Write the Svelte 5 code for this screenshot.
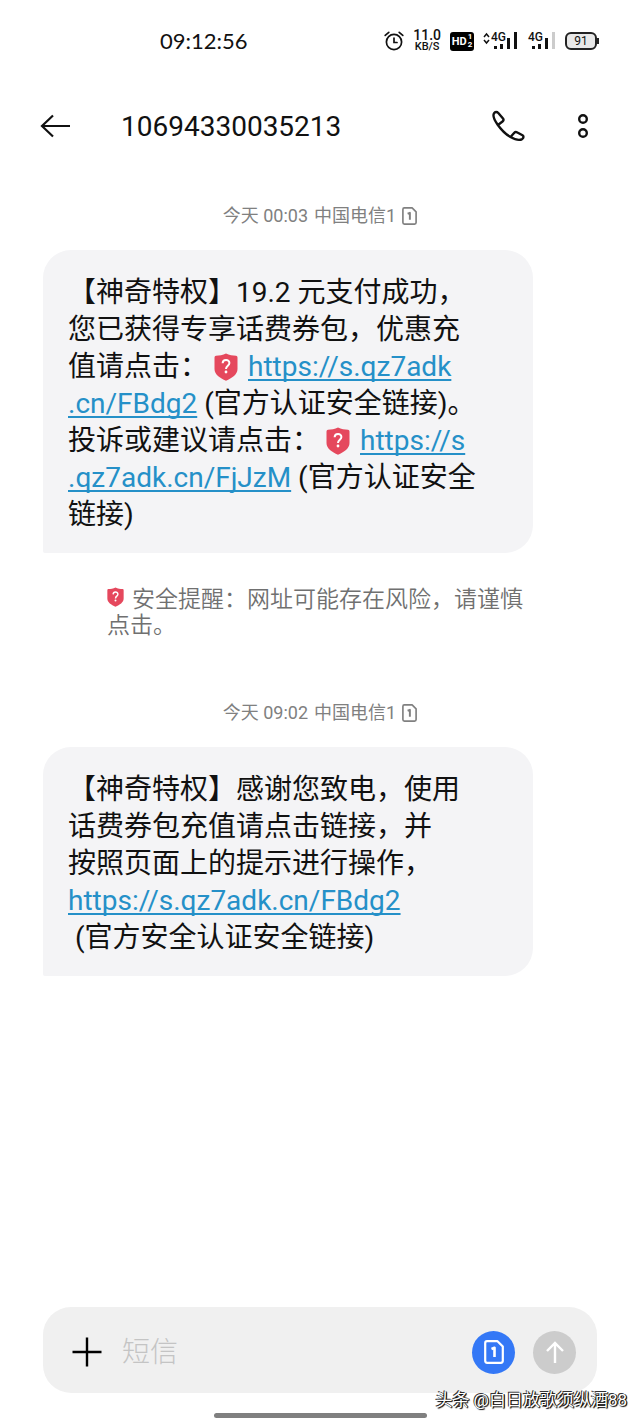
<script lang="ts">
  const number = '10694330035213';
  const carrier = '中国电信1';
  let draft = $state('');
</script>

{#snippet shield(cls: string)}
  <svg class={cls} viewBox="0 0 24 28" aria-hidden="true">
    <path d="M12 0.5 C15 2 19 2.6 22 2.8 Q23.5 3 23.5 4.5 V16 C23.5 21.500 18 25 12 27.8 C6 25 0.5 21.500 0.5 16 V4.5 Q0.5 3 2 2.8 C5 2.6 9 2 12 0.5Z" fill="#e5485d" />
    <path d="M8.600 10.300 C8.800 6 15.400 6 15.400 10 C15.400 12.800 12 12.800 12 16" fill="none" stroke="#fff" stroke-width="2" />
    <circle cx="12" cy="19" r="1.400" fill="#fff" />
  </svg>
{/snippet}

{#snippet sim(cls: string)}
  <svg class={cls} viewBox="0 0 20 24" fill="none" stroke="currentColor" stroke-width="2.200" stroke-linejoin="round" aria-hidden="true">
    <path d="M3 1.200 H13.500 L18.800 6.500 V20.800 Q18.800 22.800 16.800 22.800 H3.200 Q1.200 22.800 1.200 20.800 V3.200 Q1.200 1.200 3 1.200Z" />
    <path d="M7.500 9 L10.500 7.800 V17" stroke-width="2.600" />
  </svg>
{/snippet}

{#snippet stamp(time: string)}
  <p class="stamp">
    <span>今天 {time}</span>
    <span>{carrier}</span>
    {@render sim('stamp__sim')}
  </p>
{/snippet}

<div class="phone">
  <div class="status">
    <time class="status__time">09:12:56</time>
    <div class="status__icons">
      <svg class="alarm" viewBox="0 0 20 20" fill="none" stroke="#111" stroke-width="1.700" stroke-linecap="round">
        <circle cx="10" cy="11" r="7.600" />
        <path d="M10 7 V11.500 H13 M1.200 4.400 L4.800 1.400 M18.800 4.400 L15.200 1.400" />
      </svg>
      <div class="speed"><b>11.0</b><span>KB/S</span></div>
      <div class="hd"><b>HD</b><span class="hd__sims"><b>1</b><b>2</b></span></div>
      <svg class="signal" viewBox="0 0 36 20" fill="#111">
        <path d="M1 6 L3.500 3 L6 6 M1 9 L3.500 12 L6 9" fill="none" stroke="#111" stroke-width="1.500" />
        <text x="8" y="10">4G</text>
        <rect x="11" y="15" width="3" height="3" /><rect x="17" y="13" width="3" height="5" />
        <rect x="24" y="7" width="3" height="11" /><rect x="31" y="1" width="3" height="17" />
      </svg>
      <svg class="signal signal--second" viewBox="0 0 28 20" fill="#111">
        <text x="0" y="10">4G</text>
        <rect x="4" y="15" width="3" height="3" /><rect x="10" y="13" width="3" height="5" />
        <rect x="17" y="7" width="3" height="11" /><rect x="24" y="1" width="3" height="17" fill="#ccc" />
      </svg>
      <div class="battery">91</div>
    </div>
  </div>

  <header class="bar">
    <button class="icon-btn" aria-label="返回">
      <svg width="30" height="24" viewBox="0 0 30 24" fill="none" stroke="#111" stroke-width="2.200">
        <path d="M30 12 H2 M13 1.500 L2 12 L13 22.500" />
      </svg>
    </button>
    <h1 class="bar__title">{number}</h1>
    <button class="icon-btn" aria-label="拨打电话">
      <svg width="34" height="32" viewBox="0 0 34 32" fill="none" stroke="#111" stroke-width="2.400" stroke-linejoin="round" stroke-linecap="round">
        <path d="M6.500 14.500 C3 9.500 1.700 5.500 3 3.300 C4 1.700 6 1.700 7.300 3 L12 8.500 C12.800 9.500 12.500 10.500 11.800 11.300 L7 15 M6.500 14.500 C10 19.500 14.500 24.200 19.500 27 M19.500 27 L23.300 22.800 C24.200 21.800 25.200 21.800 26.400 22.500 L31.500 25.300 C33 26.200 32.500 28 31.300 28.900 C29 30.500 24.500 29.900 19.500 27 Z" />
      </svg>
    </button>
    <button class="icon-btn bar__more" aria-label="更多">
      <svg width="12" height="26" viewBox="0 0 12 26" fill="none" stroke="#111" stroke-width="2.400">
        <circle cx="6" cy="6" r="3.800" /><circle cx="6" cy="20" r="3.800" />
      </svg>
    </button>
  </header>

  <main class="thread">
    {@render stamp('00:03')}
    <div class="bubble">
      【神奇特权】19.2 元支付成功，<br />
      您已获得专享话费券包，优惠充<br />
      值请点击：{@render shield('shield')}<a href="https://s.qz7adk.cn/FBdg2">https://s.qz7adk<br />.cn/FBdg2</a> (官方认证安全链接)。<br />
      投诉或建议请点击：{@render shield('shield')}<a href="https://s.qz7adk.cn/FjJzM">https://s<br />.qz7adk.cn/FjJzM</a> (官方认证安全<br />
      链接)
    </div>
    <p class="notice">
      {@render shield('shield shield--small')}安全提醒：网址可能存在风险，请谨慎点击。
    </p>

    {@render stamp('09:02')}
    <div class="bubble">
      【神奇特权】感谢您致电，使用<br />
      话费券包充值请点击链接，并<br />
      按照页面上的提示进行操作，<br />
      <a href="https://s.qz7adk.cn/FBdg2">https://s.qz7adk.cn/FBdg2</a><br />
      &nbsp;(官方安全认证安全链接)
    </div>
  </main>

  <form class="composer" onsubmit={(e) => e.preventDefault()}>
    <button type="button" class="icon-btn" aria-label="添加">
      <svg width="30" height="30" viewBox="0 0 30 30" stroke="#000" stroke-width="2.400">
        <path d="M15 0.500 V29.500 M0.500 15 H29.500" />
      </svg>
    </button>
    <input class="composer__input" type="text" placeholder="短信" aria-label="短信" bind:value={draft} />
    <button type="button" class="round round--sim" aria-label="SIM 1">{@render sim('round__sim')}</button>
    <button type="submit" class="round" aria-label="发送">
      <svg width="20" height="22" viewBox="0 0 20 22" fill="none" stroke="#fff" stroke-width="2.400">
        <path d="M10 22 V2.500 M2 10 L10 2 L18 10" />
      </svg>
    </button>
  </form>
  <div class="home"></div>
  <div class="credit">头条 @白日放歌须纵酒88</div>
</div>

<style>
  :global(body) { margin: 0; background: #fff; }
  .phone { position: relative; box-sizing: border-box; min-height: 100vh; display: flex; flex-direction: column; padding: 0 43px 4px; font-family: Roboto, "Noto Sans CJK SC", sans-serif; color: #111; text-spacing-trim: space-all; }

  .status { display: flex; align-items: center; justify-content: space-between; height: 82px; margin-right: -3px; }
  .status__time { margin-left: 117px; font: 22px/24px Lato, sans-serif; }
  .status__icons { display: flex; align-items: center; gap: 9px; }
  .alarm { width: 20px; height: 20px; }
  .speed { display: flex; flex-direction: column; align-items: center; font: 500 11px/12px Roboto, sans-serif; }
  .speed b { font-size: 14px; line-height: 12px; font-weight: 500; }
  .hd { display: flex; align-items: center; justify-content: center; gap: 1px; width: 24px; height: 19px; border-radius: 3px; background: #000; color: #fff; font-size: 11px; }
  .hd__sims { display: flex; flex-direction: column; font-size: 8px; line-height: 8px; }
  .signal { width: 36px; height: 20px; overflow: visible; font: 500 12px Roboto, sans-serif; }
  .signal--second { width: 28px; }
  .battery { position: relative; box-sizing: border-box; width: 32px; height: 18px; margin-right: 3px; border: 2px solid #222; border-radius: 6px; background: #e8e8e8; font-size: 12px; line-height: 14px; text-align: center; }
  .battery::after { content: ""; position: absolute; top: 4px; right: -4px; width: 2px; height: 6px; background: #222; }

  .icon-btn { display: flex; padding: 0; border: 0; background: none; cursor: pointer; }
  .bar { display: flex; align-items: center; height: 88px; margin-left: -3px; }
  .bar__title { flex: 1; margin: 0 0 0 51px; font-size: 28px; font-weight: 400; }
  .bar__more { margin: 0 8px 0 52px; }

  .thread { flex: 1; padding-top: 32px; }
  .stamp { display: flex; align-items: center; justify-content: center; gap: 6px; margin: 0 0 21px; font-size: 18px; line-height: 27px; color: #808080; }
  .stamp__sim { width: 15px; height: 18px; }
  .bubble { box-sizing: border-box; max-width: 490px; padding: 24px 25px 20px; border-radius: 28px 28px 28px 2px; background: #f4f4f6; font-size: 28px; line-height: 37px; white-space: nowrap; color: #111; }
  .bubble a { color: #2590c8; text-decoration: underline; text-decoration-thickness: 2px; text-underline-offset: 3px; text-decoration-skip-ink: none; }
  .shield { width: 24px; height: 28px; margin: 0 10px 0 6px; vertical-align: -5px; }
  .shield--small { width: 17px; height: 20px; margin: 0 8px 0 0; vertical-align: 0; }
  .notice { max-width: 420px; margin: 34px 0 60px 64px; font-size: 23px; font-weight: 350; line-height: 26px; color: #707070; }

  .composer { box-sizing: border-box; display: flex; align-items: center; height: 86px; padding: 4px 21px 0 29px; margin-bottom: 20px; border-radius: 28px; background: #f0f0f0; }
  .composer__input { flex: 1; min-width: 0; margin: 0 20px; padding: 0; border: 0; outline: 0; background: none; font: inherit; font-size: 28px; color: #111; }
  .composer__input::placeholder { color: #c4c4c4; opacity: 1; font-weight: 300; }
  .round { display: flex; align-items: center; justify-content: center; flex: none; width: 43px; height: 43px; padding: 0; border: 0; border-radius: 50%; background: #ccc; color: #fff; cursor: pointer; }
  .round--sim { margin-right: 18px; background: #3478f6; }
  .round__sim { width: 20px; height: 24px; }

  .home { align-self: center; width: 213px; height: 5px; border-radius: 3px; background: #808080; }
  .credit { position: absolute; right: 13px; bottom: 11px; font-size: 17px; line-height: 22px; color: #fff; text-shadow: 1px 1px 1px #000, -1px -1px 0 #333, 1px 0 0 #222; }
</style>
